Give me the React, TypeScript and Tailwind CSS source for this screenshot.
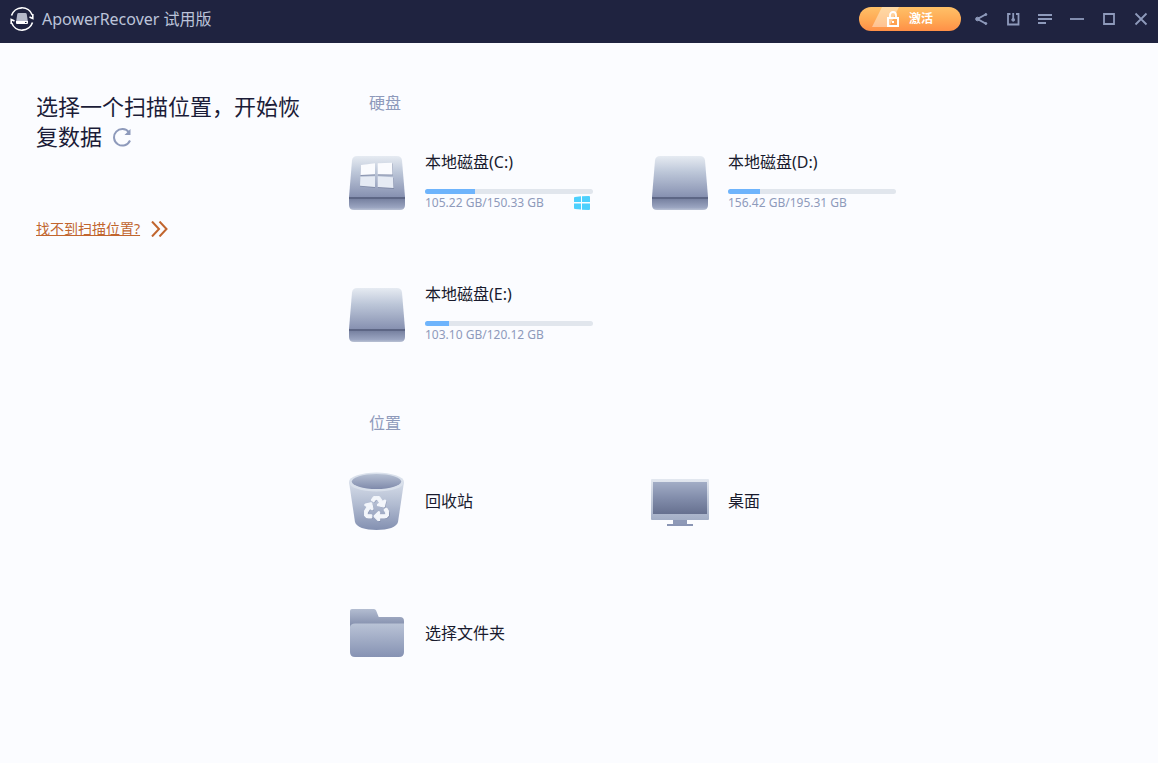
import React from 'react';
import { FaRecycle } from 'react-icons/fa';

interface Disk {
  id: string;
  name: string;
  size: string;
  percent: number;
  isSystem?: boolean;
}

interface Place {
  id: string;
  name: string;
  icon: React.ReactNode;
}

const DriveIcon: React.FC<{ id: string; isSystem?: boolean }> = ({ id, isSystem }) => (
  <svg width="60" height="60" viewBox="0 0 60 60" className="shrink-0" aria-hidden="true">
    <defs>
      <linearGradient id={`drive-top-${id}`} x1="0" y1="0" x2="0" y2="1">
        <stop offset="0" stopColor="#e6ebf2" />
        <stop offset="0.4" stopColor="#bcc6d8" />
        <stop offset="1" stopColor="#8791b1" />
      </linearGradient>
      <linearGradient id={`drive-front-${id}`} x1="0" y1="0" x2="0" y2="1">
        <stop offset="0" stopColor="#6f7999" />
        <stop offset="0.8" stopColor="#9aa4c0" />
        <stop offset="1" stopColor="#b9c1d4" />
      </linearGradient>
    </defs>
    <path d="M10 5h40q4.500 0 5 4.500L58 46H2L5 9.500Q5.500 5 10 5z" fill={`url(#drive-top-${id})`} />
    <path d="M2 46h56v8q0 5-5 5H7q-5 0-5-5z" fill={`url(#drive-front-${id})`} />
    <path d="M2 46h56v2H2z" fill="#5d6685" />
    {isSystem && (
      <>
        <path
          d="M14 14.500l14-1.500v11.500l-14.500.500zM31 13l14.500-.500.500 12H31zM13.300 26.500l14.700-.500v11l-15-1.500zM31 26l15.500 1 .500 11L31 37z"
          fill="#6f7998"
          opacity="0.6"
        />
        <path d="M14 14l14-1.700v11l-14.500.700zM30.700 12.300l14.300-.600.500 11.800-14.800-.200z" fill="#fafbfe" />
        <path d="M13.300 25.700l14.700-.400V36l-15-1.300zM30.700 25.300L46 26.300l.500 10.700-15.800-1z" fill="#e6ebf4" />
      </>
    )}
  </svg>
);

const TrashIcon = () => (
  <svg width="60" height="60" viewBox="0 0 60 60" className="shrink-0" aria-hidden="true">
    <defs>
      <linearGradient id="bin-body" x1="0" y1="0" x2="0" y2="1">
        <stop offset="0" stopColor="#d5dce8" />
        <stop offset="0.45" stopColor="#b3bdd2" />
        <stop offset="1" stopColor="#8390b1" />
      </linearGradient>
      <linearGradient id="bin-inner" x1="0" y1="0" x2="0" y2="1">
        <stop offset="0" stopColor="#b6c0d3" />
        <stop offset="1" stopColor="#7f8aab" />
      </linearGradient>
    </defs>
    <path d="M2 11L8 51c1 5 10 8 21.500 8S50 56 51 51l6-40z" fill="url(#bin-body)" />
    <ellipse cx="29.500" cy="11" rx="27.500" ry="9.500" fill="#d9e0eb" />
    <ellipse cx="29.500" cy="10.500" rx="24.700" ry="7.500" fill="url(#bin-inner)" />
    <FaRecycle x={18} y={26} size={25} color="#737e9f" opacity={0.5} />
    <FaRecycle x={17} y={25} size={25} color="#f3f6fb" stroke="#f3f6fb" strokeWidth={24} />
  </svg>
);

const DesktopIcon = () => (
  <svg width="60" height="60" viewBox="0 0 60 60" className="shrink-0" aria-hidden="true">
    <defs>
      <linearGradient id="monitor-frame" x1="0" y1="0" x2="0" y2="1">
        <stop offset="0" stopColor="#e3e8f0" />
        <stop offset="1" stopColor="#a3aec6" />
      </linearGradient>
      <linearGradient id="monitor-screen" x1="0" y1="0" x2="0" y2="1">
        <stop offset="0" stopColor="#a2adc6" />
        <stop offset="0.5" stopColor="#828dab" />
        <stop offset="1" stopColor="#66708f" />
      </linearGradient>
    </defs>
    <path d="M23 48h14v5H23z" fill="#8e99b7" />
    <path d="M17 53h26v2H17z" fill="#8a95b4" />
    <rect x="1" y="8" width="58" height="41" rx="1" fill="url(#monitor-frame)" />
    <rect x="3" y="11" width="54" height="32" fill="url(#monitor-screen)" />
  </svg>
);

const FolderIcon = () => (
  <svg width="60" height="60" viewBox="0 0 60 60" className="shrink-0" aria-hidden="true">
    <defs>
      <linearGradient id="folder-back" x1="0" y1="0" x2="0" y2="1">
        <stop offset="0" stopColor="#b3bdd1" />
        <stop offset="1" stopColor="#7d88a8" />
      </linearGradient>
      <linearGradient id="folder-front" x1="0" y1="0" x2="0" y2="1">
        <stop offset="0" stopColor="#b9c3d6" />
        <stop offset="1" stopColor="#8692b3" />
      </linearGradient>
    </defs>
    <path d="M5 6h22q1.500 0 2.100 1.500L31.700 14H53q4 0 4 4v7H3V8q0-2 2-2z" fill="url(#folder-back)" />
    <path d="M3 24q.500-3.500 5-3.500h49V49q0 5-5 5H8q-5 0-5-5z" fill="url(#folder-front)" />
  </svg>
);

const LogoIcon = () => (
  <svg width="24" height="24" viewBox="0 0 24 24" className="shrink-0" aria-hidden="true">
    <g fill="none" stroke="#fff" strokeWidth="1.600">
      <path d="M1.500 8.500A11 11 0 0 1 22.300 8" />
      <path d="M22.500 15.500A11 11 0 0 1 1.700 16" />
      <path d="M22.800 7v4.500L19.500 10" />
      <path d="M1.200 17v-4.500L4.500 14" />
    </g>
    <path d="M8.500 6h7q1 0 1.200 1l1.100 7H6.200l1.100-7q.200-1 1.200-1z" fill="#b4b8c9" />
    <path d="M6 14h12v2q0 1-1 1H7q-1 0-1-1z" fill="#fff" />
    <path d="M15 15h1.500v1H15z" fill="#1f2340" />
  </svg>
);

const toolButtons = [
  {
    label: '分享',
    icon: (
      <>
        <path d="M13.500 3L4.500 8l9 5" strokeWidth="2" />
        <circle cx="4.500" cy="8" r="1.800" fill="currentColor" strokeWidth="1" />
        <circle cx="12.800" cy="3.500" r="1" fill="currentColor" strokeWidth="1" />
        <circle cx="12.800" cy="12.500" r="1" fill="currentColor" strokeWidth="1" />
      </>
    ),
  },
  {
    label: '导入',
    icon: (
      <>
        <path d="M5.500 3H3v10.500h10.500V3H11M8.200 2v6" />
        <circle cx="8.200" cy="8.800" r="1.400" fill="currentColor" strokeWidth="1" />
      </>
    ),
  },
  { label: '菜单', icon: <path d="M1 4h14M1 8h14M1 12h8" /> },
  { label: '最小化', icon: <path d="M1 8h14" /> },
  { label: '最大化', icon: <path d="M3 3h10v10H3z" /> },
  { label: '关闭', icon: <path d="M2.500 2.500l11 11M13.500 2.500l-11 11" /> },
];

const disks: Disk[] = [
  { id: 'c', name: '本地磁盘(C:)', size: '105.22 GB/150.33 GB', percent: 30, isSystem: true },
  { id: 'd', name: '本地磁盘(D:)', size: '156.42 GB/195.31 GB', percent: 19 },
  { id: 'e', name: '本地磁盘(E:)', size: '103.10 GB/120.12 GB', percent: 14 },
];

const places: Place[] = [
  { id: 'trash', name: '回收站', icon: <TrashIcon /> },
  { id: 'desktop', name: '桌面', icon: <DesktopIcon /> },
  { id: 'folder', name: '选择文件夹', icon: <FolderIcon /> },
];

const Header = () => (
  <header className="flex h-[43px] items-center bg-[#1f2340] pb-[5px] pl-2.5 pr-px">
    <LogoIcon />
    <span className="ml-2 text-base text-[#bcc4da]">ApowerRecover 试用版</span>

    <button
      type="button"
      className="relative ml-auto mr-1 flex h-6 w-[102px] items-center gap-2.5 overflow-hidden rounded-full bg-linear-to-b from-[#ffc068] via-[#ffab55] to-[#ff8f47] pl-7 text-xs font-bold text-white"
    >
      {/* Diagonal shine behind the lock */}
      <svg width="28" height="24" viewBox="0 0 28 24" className="absolute left-3 top-0" aria-hidden="true">
        <path d="M11 0h17L18 20H1z" fill="#fff" opacity="0.4" />
      </svg>
      <svg width="12" height="16" viewBox="0 0 12 16" className="relative" aria-hidden="true">
        <path d="M1 7h10v8H1z" fill="none" stroke="#fff" strokeWidth="2" />
        <path d="M3 7V4a3 3 0 0 1 6 0v3" fill="none" stroke="#fff" strokeWidth="1.800" />
        <path d="M5 10h2v2H5z" fill="#fff" />
      </svg>
      <span className="relative">激活</span>
    </button>

    {toolButtons.map((button) => (
      <button
        key={button.label}
        type="button"
        aria-label={button.label}
        className="flex size-8 items-center justify-center text-[#8e9abb] hover:text-white"
      >
        <svg width="16" height="16" viewBox="0 0 16 16" fill="none" stroke="currentColor" strokeWidth="1.800">
          {button.icon}
        </svg>
      </button>
    ))}
  </header>
);

const DiskItem: React.FC<{ disk: Disk }> = ({ disk }) => (
  <button type="button" className="flex items-center gap-[18px] text-left">
    <DriveIcon id={disk.id} isSystem={disk.isSystem} />
    <span className="flex w-[168px] flex-col">
      <span className="text-base leading-[22px] text-[#191b2e]">{disk.name}</span>
      <span className="mt-4 h-[5px] overflow-hidden rounded-full bg-[#e1e6ed]">
        <span className="block h-full bg-[#6eb4fc]" style={{ width: `${disk.percent}%` }} />
      </span>
      <span className="flex h-[17px] items-center justify-between pr-[3px] text-xs text-[#8e9abb]">
        {disk.size}
        {disk.isSystem && (
          <svg width="16" height="14" viewBox="0 0 16 14" fill="#4dd0fd" aria-hidden="true">
            <path d="M1 1l6-.700V6H0V2q0-1 1-1zM8 .200L15 0q1 0 1 1v5H8zM0 7.500h7v6l-6-.500q-1 0-1-1zM8 7.500h8V13q0 1-1 1l-7-.300z" />
          </svg>
        )}
      </span>
    </span>
  </button>
);

const App: React.FC = () => {
  return (
    <div className="min-h-screen bg-[#fbfcff] font-['Noto_Sans','Noto_Sans_CJK_SC',sans-serif]">
      <Header />

      <div className="flex gap-[41px] pl-9">
        <aside className="w-[270px] shrink-0 pt-12">
          <h1 className="text-[22px] leading-[30px] text-[#1b1c38]">
            选择一个扫描位置，开始恢复数据
            <button type="button" aria-label="刷新" className="mb-1 ml-2.5 align-middle text-[#8e9abb]">
              <svg width="20" height="20" viewBox="0 0 20 20" fill="none" stroke="currentColor" strokeWidth="2">
                <path d="M18 13.500A8.300 8.300 0 1 1 17 5.300" />
                <path d="M18.500 2v6h-6z" fill="currentColor" stroke="none" />
              </svg>
            </button>
          </h1>
          <a href="#help" className="mt-[68px] flex items-center gap-[11px] text-sm text-[#c1652e]">
            <span className="underline">找不到扫描位置?</span>
            <svg width="17" height="16" viewBox="0 0 17 16" fill="none" stroke="currentColor" strokeWidth="2" aria-hidden="true">
              <path d="M1 .500L8 8l-7 7.500M8.500.500l7 7.500-7 7.500" />
            </svg>
          </a>
        </aside>

        <main className="min-w-0 flex-1 pb-16 pt-12">
          <section>
            <h2 className="pl-[22px] text-base leading-6 text-[#8e9abb]">硬盘</h2>
            <div className="mt-9 grid grid-cols-[repeat(auto-fill,303px)] gap-y-[72px]">
              {disks.map((disk) => (
                <DiskItem key={disk.id} disk={disk} />
              ))}
            </div>
          </section>

          <section className="mt-[68px]">
            <h2 className="pl-[22px] text-base leading-6 text-[#8e9abb]">位置</h2>
            <div className="mt-9 grid grid-cols-[repeat(auto-fill,303px)] gap-y-[72px]">
              {places.map((place) => (
                <button key={place.id} type="button" className="flex items-center gap-[18px] text-left">
                  {place.icon}
                  <span className="text-base text-[#191b2e]">{place.name}</span>
                </button>
              ))}
            </div>
          </section>
        </main>
      </div>
    </div>
  );
};

export default App;
